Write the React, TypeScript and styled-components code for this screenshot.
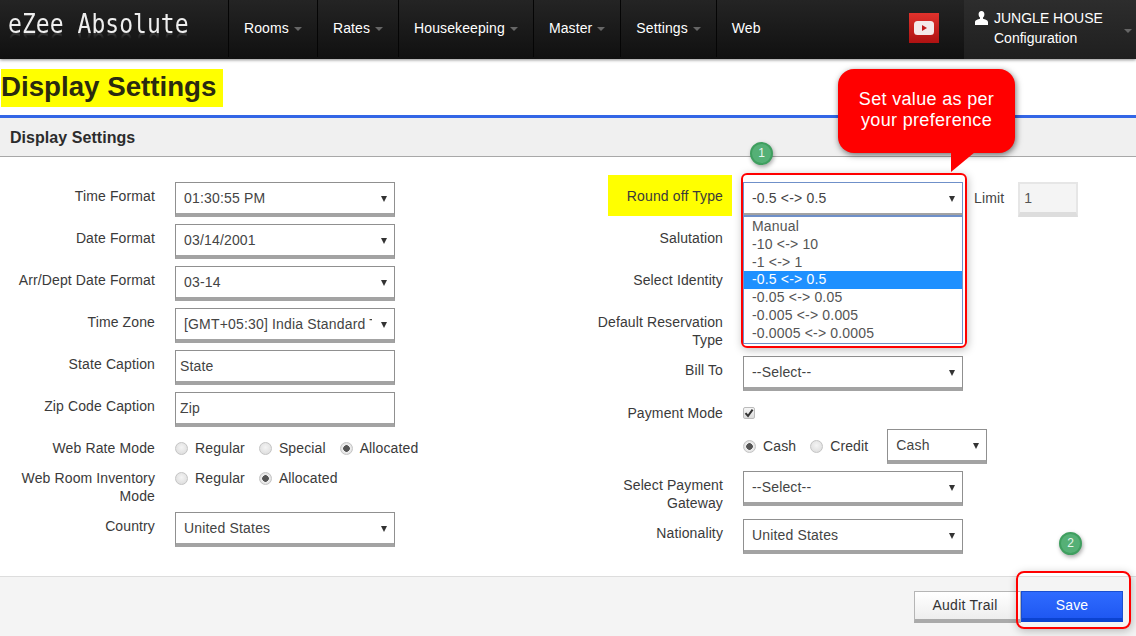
import React from "react";
import styled, { createGlobalStyle } from "styled-components";

const Global = createGlobalStyle`
  html, body { margin: 0; padding: 0; background: #fff; }
  body { font-family: "Liberation Sans", Arial, sans-serif; font-size: 14px; color: #333; }
  * { box-sizing: border-box; }
`;

const Page = styled.div`
  position: relative;
  width: 1136px;
  height: 636px;
  overflow: hidden;
  display: flex;
  flex-direction: column;
  background: #fff;
`;

const Navbar = styled.header`
  display: flex;
  align-items: stretch;
  height: 59px;
  flex: none;
  background: linear-gradient(#242424, #101010);
  box-shadow: 0 1px 3px rgba(0, 0, 0, 0.45);
  position: relative;
  z-index: 1;
`;

const Logo = styled.div`
  width: 228px;
  flex: none;
  padding: 13px 0 0 8px;
`;

const LogoText = styled.span`
  display: inline-block;
  height: 24px;
  font-family: "DejaVu Sans Mono", monospace;
  font-size: 23px;
  line-height: 24px;
  letter-spacing: 0.05px;
  color: #eee;
  transform: scaleY(1.15);
  transform-origin: 50% 20px;
  -webkit-box-reflect: below -8px linear-gradient(transparent 62%, rgba(255, 255, 255, 0.3));
`;

const NavItem = styled.div`
  display: flex;
  align-items: center;
  height: 57px;
  padding: 0 15px 2px;
  border-left: 1px solid #050505;
  color: #fff;
  font-size: 14px;
  letter-spacing: 0.11px;
`;

const Caret = styled.span`
  width: 0;
  height: 0;
  margin: 2px 0 0 5px;
  border-left: 4px solid transparent;
  border-right: 4px solid transparent;
  border-top: 4px solid #666;
`;

const VideoButton = styled.div`
  align-self: flex-start;
  width: 30px;
  height: 30px;
  margin: 13px 25px 0 auto;
  display: flex;
  align-items: center;
  justify-content: center;
  background: linear-gradient(#e0322c, #ae1212);
`;

const UserPanel = styled.div`
  position: relative;
  width: 172px;
  flex: none;
  display: flex;
  gap: 6px;
  padding: 8px 0 0 11px;
  background: linear-gradient(#2d2d2d, #1f1f1f);
  color: #fff;
  line-height: 20px;
`;

const UserIcon = styled.svg`
  width: 13px;
  height: 14px;
  margin-top: 3px;
  flex: none;
`;

const UserCaret = styled(Caret)`
  position: absolute;
  right: 4px;
  top: 29px;
  margin: 0;
`;

const TitleBar = styled.div`
  height: 56px;
  flex: none;
  padding: 10px 0 0 1px;
`;

const Title = styled.h1`
  display: inline-block;
  margin: 0;
  height: 38px;
  padding-right: 7px;
  background: #ff0;
  color: #2a2a10;
  font-size: 27.7px;
  font-weight: 700;
  line-height: 36px;
`;

const SectionHeader = styled.div`
  height: 42px;
  flex: none;
  padding-left: 10px;
  border-top: 3px solid #3366e6;
  border-bottom: 1px solid #a8a8a8;
  background: #f0f0f0;
  color: #2c2c2c;
  font-size: 16px;
  font-weight: 700;
  line-height: 40px;
  letter-spacing: 0.05px;
`;

const Form = styled.main`
  flex: 1;
  display: grid;
  grid-template-columns: 568px 568px;
  padding-top: 25px;
  letter-spacing: 0.12px;
`;

const Column = styled.div`
  display: flex;
  flex-direction: column;
  gap: 7px;
`;

const Row = styled.div`
  display: flex;
  gap: 20px;
  min-height: 35px;
`;

const ShortRow = styled(Row)`
  min-height: 23px;
`;

const CheckRow = styled(Row)`
  min-height: 24px;
  padding-top: 1px;
`;

const Label = styled.label<{ $mark?: boolean }>`
  position: relative;
  flex: none;
  width: 155px;
  padding-top: 5px;
  font-size: 14px;
  line-height: 18px;
  text-align: right;
  color: #3a3a3a;
  z-index: 0;
  ${(p) =>
    p.$mark &&
    `
    &::before {
      content: "";
      position: absolute;
      z-index: -1;
      left: 40px;
      right: -9px;
      top: -7px;
      height: 41px;
      background: #ff0;
    }
  `}
`;

const Field = styled.div<{ $w?: number }>`
  position: relative;
  flex: none;
  width: ${(p) => p.$w ?? 220}px;
  height: 35px;
  &::after {
    content: "";
    position: absolute;
    right: 8px;
    top: 14px;
    border-left: 3.5px solid transparent;
    border-right: 3.5px solid transparent;
    border-top: 6px solid #333;
    pointer-events: none;
  }
`;

const Select = styled.select<{ $focus?: boolean }>`
  display: block;
  width: 100%;
  height: 35px;
  appearance: none;
  margin: 0;
  padding: 0 22px 0 8px;
  border: 1px solid ${(p) => (p.$focus ? "#6f90c9" : "#909090")};
  border-bottom: 4px solid #a3a3a3;
  border-radius: 0;
  background: #fff;
  color: #444;
  font: 14px "Liberation Sans", Arial, sans-serif;
  letter-spacing: 0.17px;
  outline: none;
`;

const TextInput = styled.input`
  display: block;
  width: 220px;
  height: 35px;
  margin: 0;
  padding: 0 4px;
  border: 1px solid #909090;
  border-bottom: 4px solid #a3a3a3;
  border-radius: 0;
  background: #fff;
  color: #444;
  font: 14px "Liberation Sans", Arial, sans-serif;
  letter-spacing: 0.17px;
  outline: none;
`;

const LimitBox = styled.input`
  display: block;
  width: 60px;
  height: 35px;
  margin: 0;
  padding: 0 4px;
  border: 2px solid #e6e6e6;
  border-bottom: 5px solid #ddd;
  background: #f4f4f4;
  color: #555;
  font: 14px "Liberation Sans", Arial, sans-serif;
  outline: none;
`;

const LimitGroup = styled.div`
  display: flex;
  align-items: flex-start;
  gap: 14px;
  margin-left: -9px;
`;

const LimitLabel = styled.span`
  padding-top: 7px;
  line-height: 18px;
  color: #444;
`;

const Radios = styled.div`
  display: flex;
  align-items: flex-start;
  gap: 14px;
  padding-top: 5px;
`;

const RadioLabel = styled.label`
  display: flex;
  align-items: flex-start;
  gap: 7px;
  line-height: 18px;
  color: #3a3a3a;
`;

const Radio = styled.input.attrs({ type: "radio" })`
  appearance: none;
  width: 13px;
  height: 13px;
  margin: 3px 0 0;
  border: 1px solid #c4c4c4;
  border-radius: 50%;
  background: radial-gradient(circle at 50% 40%, #f4f4f4, #d9d9d9);
  &:checked {
    background: radial-gradient(circle, #555 0 3px, #eee 3.6px, #d5d5d5 100%);
  }
`;

const CheckBoxWrap = styled.span`
  display: flex;
  align-items: center;
  justify-content: center;
  width: 12px;
  height: 12px;
  margin-top: 8px;
  border: 1px solid #bbb;
  border-radius: 2px;
  background: linear-gradient(#f6f6f6, #dcdcdc);
`;

const PayRow = styled(Row)`
  align-items: flex-start;
`;

const PayControls = styled.div`
  display: flex;
  align-items: flex-start;
  gap: 19px;
`;

const PayRadios = styled(Radios)`
  padding-top: 8px;
`;

const CompactSelect = styled(Select)`
  padding-bottom: 1px;
`;

const DropList = styled.ul`
  position: absolute;
  z-index: 2;
  top: 33px;
  left: 0;
  width: 220px;
  height: 129px;
  margin: 0;
  padding: 1px 0 0;
  list-style: none;
  background: #fff;
  border: 1px solid #6f90c9;
  border-top-width: 2px;
`;

const DropItem = styled.li<{ $active?: boolean }>`
  height: 17.83px;
  padding-left: 8px;
  font-size: 14px;
  line-height: 17px;
  letter-spacing: 0.17px;
  color: ${(p) => (p.$active ? "#fff" : "#555")};
  background: ${(p) => (p.$active ? "#1e90ff" : "transparent")};
`;

const Footer = styled.footer`
  flex: none;
  height: 60px;
  display: flex;
  justify-content: flex-end;
  align-items: flex-start;
  padding: 14px 13px 0 0;
  background: #f4f4f4;
  border-top: 1px solid #ddd;
`;

const AuditButton = styled.button`
  width: 107px;
  height: 32px;
  padding: 0 5px 2px 0;
  border: 1px solid #b5b5b5;
  border-bottom: 4px solid #aaa;
  border-radius: 0;
  background: linear-gradient(#fff, #eee);
  color: #333;
  font: 14px "Liberation Sans", Arial, sans-serif;
  letter-spacing: 0.25px;
`;

const SaveButton = styled.button`
  width: 102px;
  height: 31px;
  padding: 0 0 1px;
  border: 1px solid #1a4fd0;
  border-bottom: 4px solid #0b43d1;
  border-radius: 0;
  background: linear-gradient(#2f6bff, #1f58f2);
  color: #fff;
  font: 14px "Liberation Sans", Arial, sans-serif;
  letter-spacing: 0.15px;
`;

const RedFrame = styled.div<{ $l: number; $t: number; $w: number; $h: number; $r: number }>`
  position: absolute;
  z-index: 3;
  left: ${(p) => p.$l}px;
  top: ${(p) => p.$t}px;
  width: ${(p) => p.$w}px;
  height: ${(p) => p.$h}px;
  border: 2px solid #f00;
  border-radius: ${(p) => p.$r}px;
  box-shadow: 1px 2px 8px rgba(0, 0, 0, 0.25);
  pointer-events: none;
`;

const Callout = styled.div`
  position: absolute;
  z-index: 4;
  left: 838px;
  top: 69px;
  width: 177px;
  height: 84px;
  padding-top: 20px;
  border-radius: 16px;
  background: #f00;
  box-shadow: 1px 2px 6px rgba(0, 0, 0, 0.55);
  color: #fff;
  font-size: 18px;
  line-height: 21px;
  letter-spacing: 0.33px;
  text-align: center;
  &::after {
    content: "";
    position: absolute;
    left: 111px;
    top: 83px;
    width: 26px;
    height: 20px;
    background: #f00;
    clip-path: polygon(2px 0, 100% 0, 2px 100%);
  }
`;

const Badge = styled.div<{ $l: number; $t: number }>`
  position: absolute;
  z-index: 4;
  left: ${(p) => p.$l}px;
  top: ${(p) => p.$t}px;
  width: 23px;
  height: 23px;
  border: 2px solid #3f9f5f;
  border-radius: 50%;
  background: #55b076;
  box-shadow: 1px 2px 4px rgba(0, 0, 0, 0.35);
  color: #e9f6ee;
  font-size: 12px;
  line-height: 19px;
  text-align: center;
`;

const Sel = ({ children, focus }: { children: string; focus?: boolean }) => (
  <Select defaultValue={children} $focus={focus}>
    <option>{children}</option>
  </Select>
);

const F = ({ v }: { v: string }) => (
  <Field>
    <Sel>{v}</Sel>
  </Field>
);

const ROUND = ["Manual", "-10 <-> 10", "-1 <-> 1", "-0.5 <-> 0.5", "-0.05 <-> 0.05", "-0.005 <-> 0.005", "-0.0005 <-> 0.0005"];

export default function App() {
  return (
    <Page>
      <Global />
      <Navbar>
        <Logo>
          <LogoText>eZee Absolute</LogoText>
        </Logo>
        {["Rooms", "Rates", "Housekeeping", "Master", "Settings"].map((n) => (
          <NavItem key={n}>
            {n}
            <Caret />
          </NavItem>
        ))}
        <NavItem>Web</NavItem>
        <VideoButton>
          <svg width="20" height="14" viewBox="0 0 20 14">
            <rect width="20" height="14" rx="3.5" fill="#f4eaea" />
            <path d="M8 4l5 3-5 3z" fill="#c01a1a" />
          </svg>
        </VideoButton>
        <UserPanel>
          <UserIcon viewBox="0 0 13 14">
            <path d="M6.5 0C4.6 0 3.6 1.4 3.6 3.2c0 1.5.6 2.7 1.4 3.4v1.1c-2 .6-5 1.5-5 3.3V14h13v-3c0-1.8-3-2.7-5-3.3V6.6c.8-.7 1.4-1.9 1.4-3.4C9.4 1.4 8.4 0 6.5 0z" fill="#fff" />
          </UserIcon>
          <div>
            JUNGLE HOUSE
            <br />
            Configuration
          </div>
          <UserCaret />
        </UserPanel>
      </Navbar>

      <TitleBar>
        <Title>Display Settings</Title>
      </TitleBar>
      <SectionHeader>Display Settings</SectionHeader>

      <Form>
        <Column>
          <Row><Label>Time Format</Label><F v="01:30:55 PM" /></Row>
          <Row><Label>Date Format</Label><F v="03/14/2001" /></Row>
          <Row><Label>Arr/Dept Date Format</Label><F v="03-14" /></Row>
          <Row><Label>Time Zone</Label><F v="[GMT+05:30] India Standard Time" /></Row>
          <Row><Label>State Caption</Label><TextInput defaultValue="State" /></Row>
          <Row><Label>Zip Code Caption</Label><TextInput defaultValue="Zip" /></Row>
          <ShortRow>
            <Label>Web Rate Mode</Label>
            <Radios>
              <RadioLabel><Radio name="rate" />Regular</RadioLabel>
              <RadioLabel><Radio name="rate" />Special</RadioLabel>
              <RadioLabel><Radio name="rate" defaultChecked />Allocated</RadioLabel>
            </Radios>
          </ShortRow>
          <ShortRow>
            <Label>Web Room Inventory Mode</Label>
            <Radios>
              <RadioLabel><Radio name="inv" />Regular</RadioLabel>
              <RadioLabel><Radio name="inv" defaultChecked />Allocated</RadioLabel>
            </Radios>
          </ShortRow>
          <Row><Label>Country</Label><F v="United States" /></Row>
        </Column>

        <Column>
          <Row>
            <Label $mark>Round off Type</Label>
            <Field>
              <Sel focus>-0.5 &lt;-&gt; 0.5</Sel>
              <DropList>
                {ROUND.map((r) => (
                  <DropItem key={r} $active={r === "-0.5 <-> 0.5"}>{r}</DropItem>
                ))}
              </DropList>
            </Field>
            <LimitGroup>
              <LimitLabel>Limit</LimitLabel>
              <LimitBox defaultValue="1" />
            </LimitGroup>
          </Row>
          <Row><Label>Salutation</Label><F v="Mr." /></Row>
          <Row><Label>Select Identity</Label><F v="--Select--" /></Row>
          <Row><Label>Default Reservation Type</Label><F v="--Select--" /></Row>
          <Row><Label>Bill To</Label><F v="--Select--" /></Row>
          <CheckRow>
            <Label>Payment Mode</Label>
            <CheckBoxWrap>
              <svg width="10" height="10" viewBox="0 0 10 10">
                <path d="M1.5 5.2L4 8l4.6-6.4" fill="none" stroke="#333" strokeWidth="2" />
              </svg>
            </CheckBoxWrap>
          </CheckRow>
          <PayRow>
            <Label />
            <PayControls>
              <PayRadios>
                <RadioLabel><Radio name="pay" defaultChecked />Cash</RadioLabel>
                <RadioLabel><Radio name="pay" />Credit</RadioLabel>
              </PayRadios>
              <Field $w={100}>
                <CompactSelect defaultValue="Cash"><option>Cash</option></CompactSelect>
              </Field>
            </PayControls>
          </PayRow>
          <Row><Label>Select Payment Gateway</Label><F v="--Select--" /></Row>
          <Row><Label>Nationality</Label><F v="United States" /></Row>
        </Column>
      </Form>

      <Footer>
        <AuditButton>Audit Trail</AuditButton>
        <SaveButton>Save</SaveButton>
      </Footer>

      <Callout>Set value as per<br />your preference</Callout>
      <RedFrame $l={741} $t={173} $w={226} $h={175} $r={6} />
      <RedFrame $l={1016} $t={571} $w={115} $h={58} $r={8} />
      <Badge $l={750} $t={142}>1</Badge>
      <Badge $l={1059} $t={532}>2</Badge>
    </Page>
  );
}
